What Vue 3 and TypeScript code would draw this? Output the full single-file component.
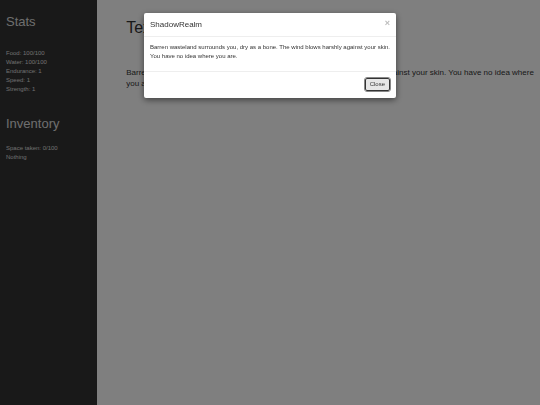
<script setup lang="ts">
import { ref } from 'vue'

interface Stat {
  label: string
  value: string
}

const stats: Stat[] = [
  { label: 'Food', value: '100/100' },
  { label: 'Water', value: '100/100' },
  { label: 'Endurance', value: '1' },
  { label: 'Speed', value: '1' },
  { label: 'Strength', value: '1' },
]

const story =
  'Barren wasteland surrounds you, dry as a bone. The wind blows harshly against your skin. You have no idea where you are.'

const open = ref(true)
</script>

<template>
  <div class="page">
    <aside class="sidebar">
      <section>
        <h2>Stats</h2>
        <ul class="stats">
          <li v-for="stat in stats" :key="stat.label">{{ stat.label }}: {{ stat.value }}</li>
        </ul>
      </section>
      <section>
        <h2>Inventory</h2>
        <ul>
          <li>Space taken: 0/100</li>
          <li>Nothing</li>
        </ul>
      </section>
    </aside>
    <main class="content">
      <h1>Text</h1>
      <p>{{ story }}</p>
    </main>
    <div v-if="open" class="backdrop">
      <div class="modal" role="dialog" aria-modal="true" aria-labelledby="modal-title">
        <header class="modal-header">
          <h4 id="modal-title">ShadowRealm</h4>
          <button class="dismiss" type="button" aria-label="Close" @click="open = false">×</button>
        </header>
        <p class="modal-body">{{ story }}</p>
        <footer class="modal-footer">
          <button class="close" type="button" @click="open = false">Close</button>
        </footer>
      </div>
    </div>
  </div>
</template>

<style>
body {
  margin: 0;
}
</style>

<style scoped>
.page {
  display: flex;
  min-height: 100vh;
  background: #fff;
  color: #333;
  font-family: "Liberation Sans", Arial, sans-serif;
  font-size: 6px;
  line-height: 9px;
}

h1,
h2,
h4,
p,
ul {
  margin: 0;
  padding: 0;
  font-weight: 400;
}

ul {
  list-style: none;
}

.sidebar {
  box-sizing: border-box;
  flex: 0 0 18%;
  display: flex;
  flex-direction: column;
  gap: 22px;
  padding: 14px 6px;
  background: #333;
  color: #ddd;
}

.sidebar h2 {
  margin-bottom: 12px;
  font-size: 13px;
  line-height: 16px;
}

.sidebar .stats {
  padding-top: 7px;
}

.content {
  flex: 1;
  padding: 18px 4px 18px 29px;
}

.content h1 {
  margin-bottom: 29px;
  font-size: 16px;
  line-height: 20px;
}

.content p {
  font-size: 8px;
  line-height: 11px;
}

.backdrop {
  position: fixed;
  inset: 0;
  display: flex;
  align-items: flex-start;
  justify-content: center;
  padding: 13px;
  background: rgba(0, 0, 0, 0.5);
}

.modal {
  flex: 0 1 252px;
  border-radius: 2px;
  background: #fff;
  box-shadow: 0 2px 6px rgba(0, 0, 0, 0.5);
}

.modal-header {
  display: flex;
  align-items: flex-start;
  justify-content: space-between;
  padding: 6px;
  border-bottom: 1px solid #eee;
}

.modal-header h4 {
  font-size: 8px;
  line-height: 11px;
}

.modal-body {
  padding: 6px 0 10px 6px;
}

.modal-footer {
  display: flex;
  justify-content: flex-end;
  padding: 6px 6px 7px;
  border-top: 1px solid #eee;
}

button {
  font-family: inherit;
  cursor: pointer;
}

.dismiss {
  padding: 0;
  border: 0;
  background: none;
  color: #bbb;
  font-size: 9px;
  font-weight: 700;
  line-height: 9px;
}

.close {
  padding: 1px 4px;
  border: 1px solid #333;
  border-radius: 2px;
  outline: 1px solid #888;
  background: #e6e6e6;
  color: #333;
  font-size: 6px;
  line-height: 9px;
}
</style>
